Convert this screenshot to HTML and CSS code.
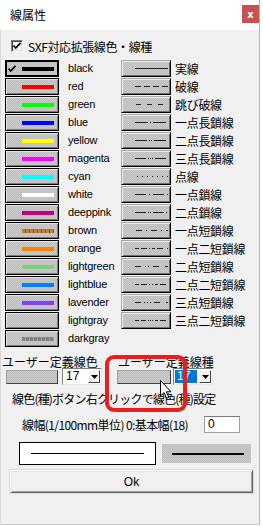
FILE: index.html
```html
<!DOCTYPE html>
<html lang="ja">
<head>
<meta charset="utf-8">
<title>線属性</title>
<link rel="stylesheet" href="styles.css">
</head>
<body>
<div class="window">
  <div class="titlebar">
    <span class="title">線属性</span>
    <span class="close">x</span>
  </div>
  <div class="client">
    <div class="sxf">
      <span class="checkbox">
        <svg width="10" height="10" viewBox="0 0 10 10"><path d="M1.5 4.5 L3.8 7 L8.5 1.8" fill="none" stroke="#000" stroke-width="1.8"/></svg>
      </span>
      <span class="sxf-label">SXF対応拡張線色・線種</span>
    </div>

    <div class="list">
      <div class="row">
        <div class="cbtn selected"><span class="tick"><svg width="8" height="7" viewBox="0 0 8 7"><path d="M0.5 3.5 L2.8 6 L7.5 0.8" fill="none" stroke="#000" stroke-width="1.6"/></svg></span><span class="swatch c-black"></span></div>
        <span class="clabel">black</span>
        <div class="lbtn"><svg width="33" height="1"><line x1="0" y1="0.5" x2="33" y2="0.5" stroke="#222"/></svg></div>
        <span class="llabel">実線</span>
      </div>
      <div class="row">
        <div class="cbtn"><span class="swatch c-red"></span></div>
        <span class="clabel">red</span>
        <div class="lbtn"><svg width="33" height="1"><line x1="0" y1="0.5" x2="33" y2="0.5" stroke="#222" stroke-dasharray="6 3" stroke-dashoffset="0"/></svg></div>
        <span class="llabel">破線</span>
      </div>
      <div class="row">
        <div class="cbtn"><span class="swatch c-green"></span></div>
        <span class="clabel">green</span>
        <div class="lbtn"><svg width="33" height="1"><line x1="0" y1="0.5" x2="33" y2="0.5" stroke="#222" stroke-dasharray="5 6" stroke-dashoffset="-1"/></svg></div>
        <span class="llabel">跳び破線</span>
      </div>
      <div class="row">
        <div class="cbtn"><span class="swatch c-blue"></span></div>
        <span class="clabel">blue</span>
        <div class="lbtn"><svg width="33" height="1"><line x1="0" y1="0.5" x2="33" y2="0.5" stroke="#222" stroke-dasharray="13 2 1 2"/></svg></div>
        <span class="llabel">一点長鎖線</span>
      </div>
      <div class="row">
        <div class="cbtn"><span class="swatch c-yellow"></span></div>
        <span class="clabel">yellow</span>
        <div class="lbtn"><svg width="33" height="1"><line x1="0" y1="0.5" x2="33" y2="0.5" stroke="#222" stroke-dasharray="12 2 1 1 1 2"/></svg></div>
        <span class="llabel">二点長鎖線</span>
      </div>
      <div class="row">
        <div class="cbtn"><span class="swatch c-magenta"></span></div>
        <span class="clabel">magenta</span>
        <div class="lbtn"><svg width="33" height="1"><line x1="0" y1="0.5" x2="33" y2="0.5" stroke="#222" stroke-dasharray="11 2 1 1 1 1 1 2"/></svg></div>
        <span class="llabel">三点長鎖線</span>
      </div>
      <div class="row">
        <div class="cbtn"><span class="swatch c-cyan"></span></div>
        <span class="clabel">cyan</span>
        <div class="lbtn"><svg width="33" height="1"><line x1="0" y1="0.5" x2="33" y2="0.5" stroke="#222" stroke-dasharray="1 4" stroke-dashoffset="-2"/></svg></div>
        <span class="llabel">点線</span>
      </div>
      <div class="row">
        <div class="cbtn"><span class="swatch c-white"></span></div>
        <span class="clabel">white</span>
        <div class="lbtn"><svg width="33" height="1"><line x1="0" y1="0.5" x2="33" y2="0.5" stroke="#222" stroke-dasharray="11 3 1 3"/></svg></div>
        <span class="llabel">一点鎖線</span>
      </div>
      <div class="row">
        <div class="cbtn"><span class="swatch c-deeppink"></span></div>
        <span class="clabel">deeppink</span>
        <div class="lbtn"><svg width="33" height="1"><line x1="0" y1="0.5" x2="33" y2="0.5" stroke="#222" stroke-dasharray="11 2 1 1 1 2"/></svg></div>
        <span class="llabel">二点鎖線</span>
      </div>
      <div class="row">
        <div class="cbtn"><span class="swatch c-brown"></span></div>
        <span class="clabel">brown</span>
        <div class="lbtn"><svg width="33" height="1"><line x1="0" y1="0.5" x2="33" y2="0.5" stroke="#222" stroke-dasharray="6 4 1 4" stroke-dashoffset="-1"/></svg></div>
        <span class="llabel">一点短鎖線</span>
      </div>
      <div class="row">
        <div class="cbtn"><span class="swatch c-orange"></span></div>
        <span class="clabel">orange</span>
        <div class="lbtn"><svg width="33" height="1"><line x1="0" y1="0.5" x2="33" y2="0.5" stroke="#222" stroke-dasharray="4 2 6 2 1 2 3 2 6"/></svg></div>
        <span class="llabel">一点二短鎖線</span>
      </div>
      <div class="row">
        <div class="cbtn"><span class="swatch c-lightgreen"></span></div>
        <span class="clabel">lightgreen</span>
        <div class="lbtn"><svg width="33" height="1"><line x1="0" y1="0.5" x2="33" y2="0.5" stroke="#222" stroke-dasharray="6 4 1 2 1 4 6"/></svg></div>
        <span class="llabel">二点短鎖線</span>
      </div>
      <div class="row">
        <div class="cbtn"><span class="swatch c-lightblue"></span></div>
        <span class="clabel">lightblue</span>
        <div class="lbtn"><svg width="33" height="1"><line x1="0" y1="0.5" x2="33" y2="0.5" stroke="#222" stroke-dasharray="4 2 6 2 1 2 1 2 3 2 6"/></svg></div>
        <span class="llabel">二点二短鎖線</span>
      </div>
      <div class="row">
        <div class="cbtn"><span class="swatch c-lavender"></span></div>
        <span class="clabel">lavender</span>
        <div class="lbtn"><svg width="33" height="1"><line x1="0" y1="0.5" x2="33" y2="0.5" stroke="#222" stroke-dasharray="6 3 1 2 1 2 1 3 6"/></svg></div>
        <span class="llabel">三点短鎖線</span>
      </div>
      <div class="row">
        <div class="cbtn"><span class="swatch c-lightgray"></span></div>
        <span class="clabel">lightgray</span>
        <div class="lbtn"><svg width="33" height="1"><line x1="0" y1="0.5" x2="33" y2="0.5" stroke="#222" stroke-dasharray="4 2 5 2 1 1 1 1 1 2 3 2 6"/></svg></div>
        <span class="llabel">三点二短鎖線</span>
      </div>
      <div class="row">
        <div class="cbtn"><span class="swatch c-darkgray"></span></div>
        <span class="clabel">darkgray</span>
      </div>
    </div>

    <div class="user-labels">
      <span class="ul1">ユーザー定義線色</span>
      <span class="ul2">ユーザー定義線種</span>
    </div>
    <div class="user-row">
      <div class="ubtn ubtn1"></div>
      <div class="select s1"><span class="sval">17</span><span class="sarrow"><svg width="7" height="4" viewBox="0 0 7 4"><path d="M0 0 H7 L3.5 4 Z" fill="#000"/></svg></span></div>
      <div class="ubtn ubtn2"></div>
      <div class="select s2"><span class="sval hl">17</span><span class="sarrow"><svg width="7" height="4" viewBox="0 0 7 4"><path d="M0 0 H7 L3.5 4 Z" fill="#000"/></svg></span></div>
    </div>
    <div class="hint">線色(種)ボタン右クリックで線色(種)設定</div>
    <div class="width-row">
      <span class="wlabel">線幅(1/100mm単位) 0:基本幅(18)</span>
      <span class="winput">0</span>
    </div>
    <div class="preview-row">
      <div class="pv-white"><span class="pv-line1"></span></div>
      <div class="pv-gray"><span class="pv-line2"></span></div>
    </div>
    <div class="ok">Ok</div>

    <div class="annot"></div>
    <svg class="cursor" width="12" height="19" viewBox="0 0 12 19"><path d="M0.5 0.5 V16 L4 12.6 L6.6 18.3 L8.8 17.3 L6.3 11.8 H11 Z" fill="#fff" stroke="#000" stroke-width="1" stroke-linejoin="miter"/></svg>
  </div>
</div>
</body>
</html>
```
FILE: styles.css
```css
html, body {
  margin: 0;
  padding: 0;
  background: #ffffff;
}
body {
  font-family: "Liberation Sans", "Noto Sans CJK JP", sans-serif;
  font-size: 12px;
  color: #000;
}
.window {
  width: 260px;
  height: 525px;
  display: flex;
  flex-direction: column;
  border-right: 1px solid #b5b5b5;
  box-sizing: border-box;
}
.titlebar {
  height: 30px;
  flex: none;
  background: #ffffff;
  display: flex;
  align-items: center;
  justify-content: space-between;
  padding-left: 10px;
  padding-right: 0;
  box-sizing: border-box;
}
.title {
  font-family: "Noto Sans CJK JP", sans-serif;
  font-size: 12px;
  color: #000;
  margin-top: -1px;
}
.close {
  width: 17px;
  height: 18px;
  background: #c75050;
  color: #fff;
  font-family: "DejaVu Sans", sans-serif;
  font-weight: bold;
  font-size: 10px;
  display: flex;
  align-items: center;
  justify-content: center;
  margin-top: -2px;
  margin-right: 0;
}
.client {
  flex: 1;
  position: relative;
  background: #f0f0f0;
  border-left: 1px solid #d8d8d8;
  border-bottom: 1px solid #c8c8c8;
  border-radius: 0 0 2px 2px;
  display: flex;
  flex-direction: column;
}
.sxf {
  display: flex;
  align-items: center;
  height: 12px;
  margin-top: 10px;
  margin-left: 10px;
}
.checkbox {
  width: 12px;
  height: 12px;
  box-sizing: border-box;
  background: #fff;
  border-top: 1px solid #808080;
  border-left: 1px solid #808080;
  border-right: 1px solid #fff;
  border-bottom: 1px solid #fff;
  box-shadow: inset 1px 1px 0 #404040, inset -1px -1px 0 #d4d4d4;
  display: flex;
  align-items: center;
  justify-content: center;
}
.checkbox svg { display: block; }
.sxf-label {
  margin-left: 5px;
  font-family: "Noto Sans CJK JP", sans-serif;
  font-size: 12px;
  letter-spacing: -0.4px;
}
.list {
  margin-top: 8px;
  display: flex;
  flex-direction: column;
}
.row {
  height: 18px;
  display: flex;
  align-items: flex-start;
  padding-left: 4px;
}
.dither {
  background-color: #c4c4c4;
}
.cbtn, .lbtn, .ubtn, .pv-gray {
  background-color: #c3c3c3;
  background-image: repeating-conic-gradient(#cbcbcb 0 25%, #bdbdbd 0 50%);
  background-size: 2px 2px;
}
.cbtn {
  width: 54px;
  height: 17px;
  box-sizing: border-box;
  border: 1px solid #000;
  box-shadow: inset 1px 1px 0 #e4e4e4, inset -1px -1px 0 #7a7a7a;
  display: flex;
  align-items: center;
  justify-content: flex-end;
  padding-right: 4px;
  position: relative;
}
.cbtn.selected {
  border: 2px solid #000;
  padding-right: 3px;
  box-shadow: none;
}
.tick {
  position: absolute;
  left: 1px;
  top: 3px;
  display: block;
  line-height: 0;
}
.swatch {
  width: 32px;
  height: 4px;
  display: block;
}
.c-black { background: #000000; }
.c-red { background: #ff0000; }
.c-green { background: #00ff00; }
.c-blue { background: #0000ff; }
.c-yellow { background: #ffff00; }
.c-magenta { background: #ff00ff; }
.c-cyan { background: #00ffff; }
.c-white { background: #ffffff; }
.c-deeppink { background: #c0007f; }
.c-brown {
  background: repeating-linear-gradient(90deg, #c08040 0 3px, #8a5020 3px 4px);
}
.c-orange { background: #ff8000; }
.c-lightgreen { background: #80cc80; }
.c-lightblue { background: #0080ff; }
.c-lavender { background: #8040ff; }
.c-lightgray { background: transparent; }
.c-darkgray {
  background: repeating-linear-gradient(90deg, #808080 0 3px, #a0a0a0 3px 4px);
}
.clabel {
  width: 53px;
  margin-left: 9px;
  font-size: 11px;
  line-height: 17px;
  letter-spacing: -0.2px;
  white-space: nowrap;
}
.lbtn {
  width: 50px;
  height: 17px;
  box-sizing: border-box;
  border-top: 1px solid #a8a8a8;
  border-left: 1px solid #a8a8a8;
  border-right: 1px solid #000;
  border-bottom: 1px solid #000;
  box-shadow: inset 1px 1px 0 #ececec, inset -1px -1px 0 #707070;
  display: flex;
  align-items: center;
  justify-content: flex-end;
  padding-right: 2px;
}
.lbtn svg { display: block; }
.llabel {
  margin-left: 4px;
  font-family: "Noto Sans CJK JP", sans-serif;
  font-size: 12px;
  line-height: 17px;
  letter-spacing: -0.3px;
  white-space: nowrap;
}
.user-labels {
  margin-top: 7px;
  height: 13px;
  display: flex;
  align-items: center;
  font-family: "Noto Sans CJK JP", sans-serif;
  font-size: 12px;
  padding-left: 1px;
  white-space: nowrap;
}
.ul1 { width: 116px; }
.user-row {
  height: 17px;
  display: flex;
  align-items: center;
  padding-left: 5px;
}
.ubtn {
  height: 14px;
  box-sizing: border-box;
  border-top: 1px solid #a0a0a0;
  border-left: 1px solid #a0a0a0;
  border-right: 1px solid #404040;
  border-bottom: 1px solid #404040;
}
.ubtn1 { width: 52px; }
.ubtn2 { width: 54px; margin-left: 15px; }
.select {
  width: 40px;
  height: 17px;
  box-sizing: border-box;
  background: #fff;
  border-top: 1px solid #808080;
  border-left: 1px solid #808080;
  border-right: 1px solid #e8e8e8;
  border-bottom: 1px solid #e8e8e8;
  display: flex;
  align-items: stretch;
  padding: 1px;
}
.s1 { margin-left: 4px; }
.s2 { margin-left: 2px; }
.sval {
  flex: 1;
  font-size: 12px;
  line-height: 13px;
  padding-left: 2px;
  font-family: "Liberation Sans", sans-serif;
}
.sval.hl {
  background: #0078d7;
  color: #fff;
  margin-right: 2px;
}
.sarrow {
  width: 12px;
  box-sizing: border-box;
  background: #f0f0f0;
  border-top: 1px solid #fff;
  border-left: 1px solid #fff;
  border-right: 1px solid #404040;
  border-bottom: 1px solid #404040;
  display: flex;
  align-items: center;
  justify-content: center;
}
.sarrow svg { display: block; }
.hint {
  margin-top: 7px;
  height: 14px;
  line-height: 14px;
  padding-left: 11px;
  font-family: "Noto Sans CJK JP", sans-serif;
  font-size: 12px;
  letter-spacing: -0.8px;
  white-space: nowrap;
}
.width-row {
  margin-top: 10px;
  height: 17px;
  display: flex;
  align-items: center;
  padding-left: 21px;
}
.wlabel {
  width: 182px;
  font-family: "Noto Sans CJK JP", sans-serif;
  font-size: 12px;
  letter-spacing: -0.6px;
  white-space: nowrap;
}
.winput {
  width: 36px;
  height: 17px;
  box-sizing: border-box;
  background: #fff;
  border: 1px solid #a0a0a0;
  border-top-color: #7a7a7a;
  font-size: 12px;
  line-height: 15px;
  padding-left: 3px;
}
.preview-row {
  margin-top: 9px;
  height: 23px;
  display: flex;
  align-items: center;
  padding-left: 18px;
}
.pv-white {
  width: 137px;
  height: 23px;
  box-sizing: border-box;
  background: #fff;
  border: 1px solid #000;
  display: flex;
  align-items: center;
  padding-left: 11px;
}
.pv-line1 {
  width: 113px;
  height: 1px;
  background: #000;
}
.pv-gray {
  width: 89px;
  height: 19px;
  margin-left: 6px;
  display: flex;
  align-items: center;
  padding-left: 10px;
  box-sizing: border-box;
}
.pv-line2 {
  width: 72px;
  height: 2px;
  background: #000;
}
.ok {
  margin-top: 5px;
  margin-left: 9px;
  width: 243px;
  height: 23px;
  box-sizing: border-box;
  background: #f0f0f0;
  border-top: 1px solid #fff;
  border-left: 1px solid #fff;
  border-right: 1px solid #696969;
  border-bottom: 1px solid #696969;
  box-shadow: inset 1px 1px 0 #e3e3e3, inset -1px -1px 0 #a0a0a0, 0 0 0 0 transparent;
  outline: 1px solid #dadada;
  display: flex;
  align-items: center;
  justify-content: center;
  font-family: "Liberation Sans", sans-serif;
  font-size: 12px;
}
.annot {
  position: absolute;
  left: 104px;
  top: 325px;
  width: 82px;
  height: 57px;
  box-sizing: border-box;
  border: 4px solid #ee1c1c;
  border-radius: 9px;
}
.cursor {
  position: absolute;
  left: 159px;
  top: 350px;
}
```
